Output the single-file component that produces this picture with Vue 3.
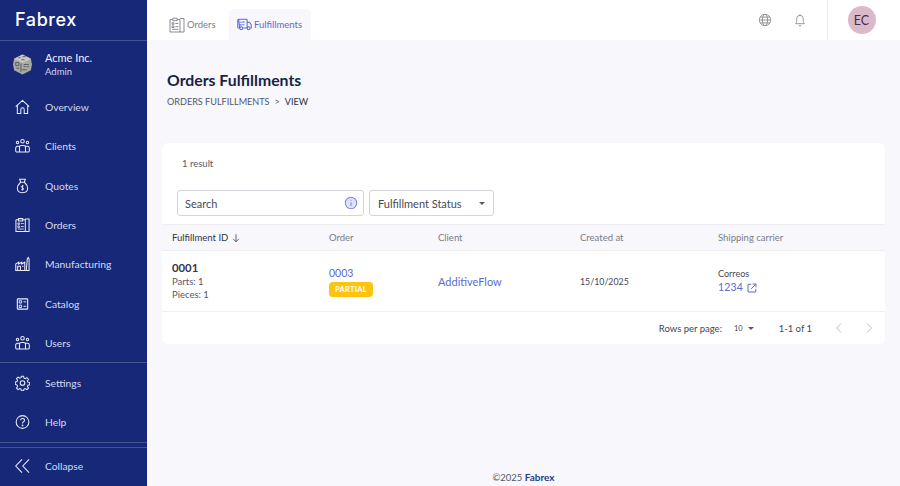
<script setup>
const navMain = [
  { label: 'Overview', icon: 'home' },
  { label: 'Clients', icon: 'people' },
  { label: 'Quotes', icon: 'bag' },
  { label: 'Orders', icon: 'orders' },
  { label: 'Manufacturing', icon: 'factory' },
  { label: 'Catalog', icon: 'catalog' },
  { label: 'Users', icon: 'people' }
];
const navBottom = [
  { label: 'Settings', icon: 'gear' },
  { label: 'Help', icon: 'help' }
];
</script>

<template>
  <div class="app">
    <svg class="defs" width="0" height="0">
      <defs>
        <symbol id="home" viewBox="0 0 16 16">
          <path d="M0.8 7.6 8 1l7.2 6.6M2.5 6.5V15h3.7v-4.3a1.8 1.8 0 0 1 3.6 0V15h3.7V6.500" />
        </symbol>
        <symbol id="people" viewBox="0 0 16 16">
          <circle cx="8" cy="3" r="1.900" />
          <circle cx="2.700" cy="4.300" r="1.300" />
          <circle cx="13.300" cy="4.300" r="1.300" />
          <path d="M4.800 14.500V9.500a2 2 0 0 1 2-2h2.400a2 2 0 0 1 2 2v5zM4.800 14.500H2.200A1.500 1.500 0 0 1 .700 13v-2.700A2 2 0 0 1 2.700 8.300h2.400M11.200 14.500h2.600a1.500 1.500 0 0 0 1.500-1.500v-2.700a2 2 0 0 0-2-2h-2.400" />
        </symbol>
        <symbol id="bag" viewBox="0 0 16 16">
          <path d="M5 .8h6l-1 3.200H6zM6 4h4M6 4C4 5.800 2.500 8 2.500 10.500c0 3 2 4.700 5.500 4.700s5.500-1.700 5.500-4.700C13.500 8 12 5.800 10 4" />
          <path d="M9.400 8.200C9 7.700 7 7.400 6.700 8.600 6.400 10 9.500 9.800 9.300 11.200 9.100 12.400 7.100 12.200 6.500 11.600M8 6.900v6" stroke-width=".9" />
        </symbol>
        <symbol id="orders" viewBox="0 0 16 16">
          <path d="M10.800 1.500H15V15h-4.200M1 2.500h2.800M8.200 2.500H11V15H1V2.500M3.800 1.200h4.400v2.500H3.800z" />
          <path d="M3 5.800h2v1.500H3zM6.400 6.500h3M3 9h2v1.500H3zM6.400 9.700h3M3 12.300h6.400" stroke-width=".9" />
        </symbol>
        <symbol id="factory" viewBox="0 0 16 16">
          <path d="M.8 15V8l3.200-2v2l3.200-2v2l3.200-2v9zM11 15h4V2.500l-.9-1.500-1 1.500L12 15M2.800 15v-4.500h3V15M7.500 10.500h1.600" />
        </symbol>
        <symbol id="catalog" viewBox="0 0 16 16">
          <rect x="2.500" y="2.500" width="11" height="11" rx=".8" stroke-width="1.200" />
          <path d="M4.500 4.500h2.500v2.500H4.500zM9 5.700h3M4.500 9.200h2.500v2.500H4.500zM9 10.400h3" stroke-width="1" />
        </symbol>
        <symbol id="gear" viewBox="0 0 16 16">
          <circle cx="8" cy="8" r="2.500" />
          <path d="M6.800.8h2.400l.4 2.100 1.300.6 1.800-1.200 1.700 1.700-1.200 1.800.6 1.300 1.900.4v2.400l-1.900.4-.6 1.300 1.200 1.800-1.700 1.700-1.800-1.200-1.300.6-.4 1.900H6.800l-.4-1.900-1.300-.6-1.800 1.200-1.700-1.700 1.200-1.800-.6-1.300L.300 9.300V6.900l1.900-.4.6-1.300-1.200-1.800 1.700-1.700 1.800 1.200 1.300-.6z" />
        </symbol>
        <symbol id="help" viewBox="0 0 16 16">
          <circle cx="8" cy="8" r="6.800" />
          <path d="M5.900 6.200c.2-2.600 4.400-2.500 4.300 0 0 1.600-2.200 1.500-2.200 3.300" />
          <circle cx="8" cy="11.600" r=".4" />
        </symbol>
      </defs>
    </svg>

    <aside class="sidebar">
      <div class="brand"><span class="brand-name">Fabrex</span></div>

      <div class="company">
        <svg class="company-logo" viewBox="0 0 20 20">
          <path d="M10 .5 18 4.500 19 10l-1 5.500-8 4-8-4L1 10l1-5.500z" fill="#a9a9a4" />
          <path d="M10 .5 18 4.500 10 8.500 2 4.500z" fill="#c9c9c4" />
          <path d="M6 3.500h2M10 2.500h3M9 5.500h3M3.500 8h3v3h-3zM4 13.500h3M11 10h5M11 12h2M14 12h2M9 15h5M8.500 9v8" stroke="#5b5b5b" stroke-width=".9" fill="none" />
        </svg>
        <div>
          <div class="company-name">Acme Inc.</div>
          <div class="company-role">Admin</div>
        </div>
      </div>

      <nav class="nav">
        <a v-for="item in navMain" :key="item.label" class="nav-item">
          <svg class="nav-icon"><use :href="'#' + item.icon" /></svg>
          <span>{{ item.label }}</span>
        </a>
      </nav>

      <nav class="nav nav-bottom">
        <a v-for="item in navBottom" :key="item.label" class="nav-item">
          <svg class="nav-icon"><use :href="'#' + item.icon" /></svg>
          <span>{{ item.label }}</span>
        </a>
      </nav>

      <div class="collapse">
        <svg class="collapse-icon" viewBox="0 0 16 16">
          <path d="M7.500 1 .8 8l6.700 7M15 1 8.300 8l6.700 7" />
        </svg>
        <span>Collapse</span>
      </div>
    </aside>

    <div class="main">
      <header class="topbar">
        <div class="tabs">
          <a class="tab">
            <svg class="tab-icon tab-icon-orders"><use href="#orders" /></svg>
            <span>Orders</span>
          </a>
          <a class="tab active">
            <svg class="tab-icon" viewBox="0 0 16 13">
              <path d="M1.800 1h8a1 1 0 0 1 1 1v8.300H6.200M2.800 10.300H1.800a1 1 0 0 1-1-1V2a1 1 0 0 1 1-1zM10.800 4h2.500l1.900 2.600v3.700h-1M10.800 10.300h-.4" />
              <circle cx="4.500" cy="10.500" r="1.500" />
              <circle cx="12.300" cy="10.500" r="1.500" />
              <path d="M3 4h5l-1-1M8 6.800H3l1 1" stroke-width=".9" />
            </svg>
            <span>Fulfillments</span>
          </a>
        </div>
        <div class="top-actions">
          <svg class="top-icon" viewBox="0 0 16 16">
            <circle cx="8" cy="8" r="6.500" />
            <ellipse cx="8" cy="8" rx="3" ry="6.500" />
            <path d="M1.500 8h13M2.400 4.700h11.200M2.400 11.300h11.200" />
          </svg>
          <svg class="top-icon" viewBox="0 0 16 16">
            <path d="M3 12.200c1-1 1.200-1.700 1.200-3.700V6.500a3.800 3.800 0 0 1 7.600 0v2c0 2 .2 2.700 1.200 3.700zM6.800 14.500h2.400M8 1.200v1.500" />
          </svg>
        </div>
        <div class="account"><div class="avatar">EC</div></div>
      </header>

      <main class="content">
        <h1 class="title">Orders Fulfillments</h1>
        <div class="crumbs">
          <span>ORDERS FULFILLMENTS</span>
          <span class="sep">&gt;</span>
          <span class="current">VIEW</span>
        </div>

        <section class="card">
          <div class="result-count">1 result</div>
          <div class="filters">
            <div class="search">
              <span>Search</span>
              <svg class="info" viewBox="0 0 16 16">
                <circle cx="8" cy="8" r="6.500" fill="#dfe2f8" />
                <path d="M8 7.200v4.300M8 4.300v1.100" />
              </svg>
            </div>
            <div class="select">
              <span>Fulfillment Status</span>
              <i class="caret"></i>
            </div>
          </div>

          <div class="row head">
            <div class="sorted">
              Fulfillment ID
              <svg class="sort-icon" viewBox="0 0 12 12"><path d="M6 1.500v9M2.500 7 6 10.500 9.500 7" /></svg>
            </div>
            <div>Order</div>
            <div>Client</div>
            <div>Created at</div>
            <div>Shipping carrier</div>
          </div>

          <div class="row body">
            <div>
              <div class="fid">0001</div>
              <div class="sub">Parts: 1</div>
              <div class="sub">Pieces: 1</div>
            </div>
            <div>
              <a class="link order-link">0003</a>
              <span class="badge">PARTIAL</span>
            </div>
            <div><a class="link">AdditiveFlow</a></div>
            <div class="date">15/10/2025</div>
            <div>
              <div class="carrier">Correos</div>
              <a class="link tracking">
                1234
                <svg class="ext" viewBox="0 0 12 12"><path d="M5 1.500H1.200v9.300h9.300V7M6.800 1.200h4v4M10.600 1.400 5 7" /></svg>
              </a>
            </div>
          </div>

          <div class="pager">
            <span>Rows per page:</span>
            <span class="page-size">10 <i class="caret small"></i></span>
            <span class="range">1-1 of 1</span>
            <svg class="chev" viewBox="0 0 8 12"><path d="M6 1.500 1.500 6 6 10.500" /></svg>
            <svg class="chev" viewBox="0 0 8 12"><path d="M2 1.500 6.500 6 2 10.500" /></svg>
          </div>
        </section>

        <footer class="footer">©2025 <b>Fabrex</b></footer>
      </main>
    </div>
  </div>
</template>

<style scoped>
.app {
  display: flex;
  height: 486px;
  overflow: hidden;
  font-family: "Lato", "Open Sans", sans-serif;
  color: #2e3040;
}

.defs {
  position: absolute;
}

.sidebar {
  width: 147px;
  flex-shrink: 0;
  display: flex;
  flex-direction: column;
  background: #172878;
  color: #d5daf2;
}

.brand {
  height: 41px;
  box-sizing: border-box;
  padding-left: 15px;
  border-bottom: 1px solid #47558f;
  display: flex;
  align-items: center;
}

.brand-name {
  font-family: "Inter", sans-serif;
  font-size: 18px;
  font-weight: 500;
  letter-spacing: .6px;
  color: #fff;
}

.company {
  display: flex;
  align-items: center;
  gap: 12px;
  height: 46.500px;
  padding-left: 12px;
  color: #fff;
}

.company-logo {
  width: 21px;
  height: 21px;
}

.company-name {
  font-size: 11px;
  line-height: 15px;
  color: #eef0fb;
}

.company-role {
  font-size: 9.500px;
  line-height: 13px;
  color: #cdd3ee;
}

.nav {
  display: flex;
  flex-direction: column;
}

.nav-bottom {
  border-top: 1px solid #47558f;
  border-bottom: 1px solid #47558f;
}

.nav-item {
  display: flex;
  align-items: center;
  gap: 15px;
  height: 39.300px;
  padding-left: 15px;
  font-size: 10.300px;
}

.nav-icon {
  width: 15px;
  height: 16px;
  fill: none;
  stroke: #eceef9;
  stroke-width: 1.100;
  flex-shrink: 0;
}

.collapse {
  margin-top: 4px;
  height: 39px;
  box-sizing: border-box;
  padding: 0 0 2px 15px;
  border-top: 1px solid #47558f;
  display: flex;
  align-items: center;
  gap: 15px;
  font-size: 10.300px;
}

.collapse-icon {
  width: 15px;
  height: 16px;
  fill: none;
  stroke: #eceef9;
  stroke-width: 1.100;
}

.main {
  flex: 1;
  display: flex;
  flex-direction: column;
  min-width: 0;
  background: #f7f7fc;
}

.topbar {
  height: 40px;
  flex-shrink: 0;
  display: flex;
  background: #fff;
}

.tabs {
  display: flex;
  flex: 1;
  padding: 9px 0 0 13px;
}

.tab {
  display: flex;
  align-items: center;
  gap: 2px;
  padding: 0 8px;
  width: 82px;
  box-sizing: border-box;
  font-size: 9.500px;
  color: #7e7e87;
  border-radius: 5px 5px 0 0;
}

.tab:first-child {
  width: 69px;
  padding-left: 9px;
}

.tab.active {
  background: #f7f7fc;
  color: #5b6bd0;
  gap: 2px;
}

.tab-icon {
  width: 15px;
  height: 13px;
  fill: none;
  stroke: currentColor;
  stroke-width: 1.100;
  flex-shrink: 0;
}

.tab-icon-orders {
  width: 16px;
  height: 16px;
  stroke-width: .9;
  color: #808088;
}

.top-actions {
  display: flex;
  align-items: center;
  gap: 21px;
  padding-right: 20px;
}

.top-icon {
  width: 14px;
  height: 14px;
  fill: none;
  stroke: #8a8a90;
  stroke-width: 1;
}

.account {
  width: 73px;
  box-sizing: border-box;
  border-left: 1px solid #ececf0;
  display: flex;
  align-items: center;
  padding-left: 19.500px;
}

.avatar {
  width: 28px;
  height: 28px;
  border-radius: 50%;
  background: #dcb9c9;
  color: #3a3340;
  font-size: 12.500px;
  display: flex;
  align-items: center;
  justify-content: center;
}

.content {
  flex: 1;
  display: flex;
  flex-direction: column;
  padding: 0 15px;
  min-height: 0;
}

.title {
  margin: 29px 0 0 5px;
  font-size: 15.800px;
  line-height: 22px;
  font-weight: 700;
  color: #1a1f45;
}

.crumbs {
  margin: 5px 0 0 5px;
  display: flex;
  gap: 5px;
  font-size: 9.100px;
  line-height: 12px;
  color: #55586a;
}

.crumbs .current {
  color: #2c2f45;
}

.card {
  margin-top: 35px;
  background: #fff;
  border-radius: 6px;
  overflow: hidden;
}

.result-count {
  padding: 14px 0 0 20px;
  font-size: 9.500px;
  line-height: 13px;
  color: #55586a;
}

.filters {
  display: flex;
  gap: 5px;
  padding: 20px 0 0 15px;
}

.search,
.select {
  height: 26px;
  box-sizing: border-box;
  border: 1px solid #d4d4da;
  border-radius: 3px;
  display: flex;
  align-items: center;
  justify-content: space-between;
  font-size: 11px;
  color: #474955;
  padding: 0 5px 0 8px;
}

.search {
  width: 187px;
  padding-left: 7px;
}

.select {
  width: 125px;
  padding-right: 8px;
}

.info {
  width: 14px;
  height: 14px;
  fill: none;
  stroke: #7d89dd;
  stroke-width: 1.200;
}

.caret {
  display: inline-block;
  width: 0;
  height: 0;
  border-left: 3.500px solid transparent;
  border-right: 3.500px solid transparent;
  border-top: 3.500px solid #5a5a62;
}

.caret.small {
  margin-left: 3px;
  vertical-align: 1px;
}

.row {
  display: grid;
  grid-template-columns: 157px 109px 142px 138px 1fr;
  align-items: center;
  padding-left: 10px;
}

.head {
  margin-top: 8px;
  height: 27px;
  box-sizing: border-box;
  background: #f7f7fc;
  border-top: 1px solid #eeeef3;
  border-bottom: 1px solid #eeeef3;
  font-size: 9.500px;
  color: #7a7c88;
}

.sorted {
  display: flex;
  align-items: center;
  gap: 3px;
  color: #33354a;
}

.sort-icon {
  width: 10px;
  height: 10px;
  fill: none;
  stroke: #44465a;
  stroke-width: 1;
}

.body {
  height: 60px;
}

.fid {
  font-size: 11.300px;
  line-height: 14px;
  font-weight: 700;
  color: #34364a;
}

.sub {
  font-size: 9.500px;
  line-height: 13px;
  color: #55586a;
}

.link {
  display: block;
  font-size: 11px;
  line-height: 15px;
  color: #5b6bd0;
}

.order-link {
  font-size: 10.500px;
}

.badge {
  display: block;
  margin-top: 1px;
  width: 44px;
  height: 15px;
  line-height: 15px;
  text-align: center;
  background: #fdc311;
  color: #fff;
  border-radius: 4px;
  font-size: 7.500px;
  font-weight: 700;
  letter-spacing: .3px;
}

.date {
  font-size: 8.800px;
  color: #44465a;
}

.carrier {
  font-size: 9px;
  line-height: 13px;
  color: #44465a;
}

.tracking {
  display: flex;
  align-items: center;
  gap: 4px;
  font-size: 10.500px;
  letter-spacing: .2px;
}

.ext {
  width: 10px;
  height: 10px;
  fill: none;
  stroke: #5b6bd0;
  stroke-width: 1.200;
}

.pager {
  height: 33px;
  box-sizing: border-box;
  border-top: 1px solid #eeeef3;
  display: flex;
  align-items: center;
  justify-content: flex-end;
  padding-right: 12px;
  font-size: 9.500px;
  color: #44465a;
}

.page-size {
  margin-left: 12px;
  font-size: 7.500px;
}

.range {
  margin: 0 23px 0 25px;
}

.chev {
  width: 8px;
  height: 12px;
  fill: none;
  stroke: #b9b9c0;
  stroke-width: 1;
}

.chev + .chev {
  margin-left: 22px;
}

.footer {
  margin-top: auto;
  padding-bottom: 2px;
  text-align: center;
  font-size: 9.500px;
  line-height: 12px;
  color: #55586a;
}

.footer b {
  color: #2d3a86;
  font-size: 10px;
}
</style>

<style>
html, body {
  margin: 0;
  background: #fff;
}
</style>
